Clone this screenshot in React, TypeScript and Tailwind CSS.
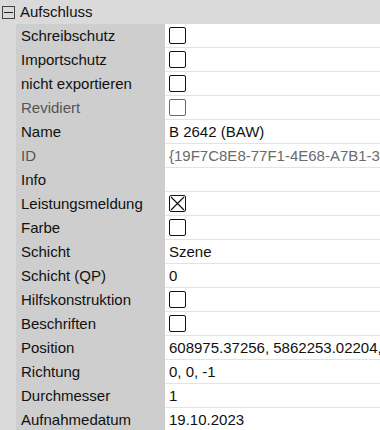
import React from "react"

type Row = {
  label: string
  value?: string
  check?: boolean
  checked?: boolean
  dim?: boolean
}

const rows: Row[] = [
  { label: "Schreibschutz", check: true },
  { label: "Importschutz", check: true },
  { label: "nicht exportieren", check: true },
  { label: "Revidiert", check: true, dim: true },
  { label: "Name", value: "B 2642 (BAW)" },
  { label: "ID", value: "{19F7C8E8-77F1-4E68-A7B1-390C2A5D11E4}", dim: true },
  { label: "Info", value: "" },
  { label: "Leistungsmeldung", check: true, checked: true },
  { label: "Farbe", check: true },
  { label: "Schicht", value: "Szene" },
  { label: "Schicht (QP)", value: "0" },
  { label: "Hilfskonstruktion", check: true },
  { label: "Beschriften", check: true },
  { label: "Position", value: "608975.37256, 5862253.02204, 54.12000" },
  { label: "Richtung", value: "0, 0, -1" },
  { label: "Durchmesser", value: "1" },
  { label: "Aufnahmedatum", value: "19.10.2023" },
]

const CheckBox = ({ checked, dim }: { checked?: boolean; dim?: boolean }) => (
  <div
    className={`relative h-[17px] w-[17px] rounded-[2px] border bg-white ${
      dim ? "border-[#6a6a6a]" : "border-[#111]"
    }`}
  >
    {checked && (
      <svg className="absolute inset-0" width="15" height="15" viewBox="0 0 15 15">
        <path d="M1 1L14 14M14 1L1 14" stroke="#111" strokeWidth="1.2" />
      </svg>
    )}
  </div>
)

const App = () => {
  return (
    <div
      className="h-[430px] w-[380px] overflow-hidden bg-[#dadada] text-[15px] text-[#111]"
      style={{ fontFamily: "'Liberation Sans', Arial, sans-serif" }}
    >
      <div className="flex h-6 items-center">
        <div className="ml-[2px] flex h-[13px] w-[13px] items-center justify-center border border-[#444]">
          <div className="h-px w-[9px] bg-[#222]" />
        </div>
        <span className="ml-[5px] leading-6">Aufschluss</span>
      </div>
      <div className="pl-4">
        {rows.map((r) => (
          <div key={r.label} className="flex h-6">
            <div
              className={`w-[149px] shrink-0 bg-[#cecece] pl-[5px] leading-6 ${
                r.dim ? "text-[#555]" : ""
              }`}
            >
              {r.label}
            </div>
            <div className="flex min-w-0 flex-1 items-center overflow-hidden border-b border-[#e3e3e3] bg-white pl-1">
              {r.check ? (
                <CheckBox checked={r.checked} dim={r.dim} />
              ) : (
                <span
                  className={`whitespace-nowrap leading-6 ${
                    r.dim ? "text-[#6b6b6b]" : ""
                  }`}
                >
                  {r.value}
                </span>
              )}
            </div>
          </div>
        ))}
      </div>
    </div>
  )
}

export default App
